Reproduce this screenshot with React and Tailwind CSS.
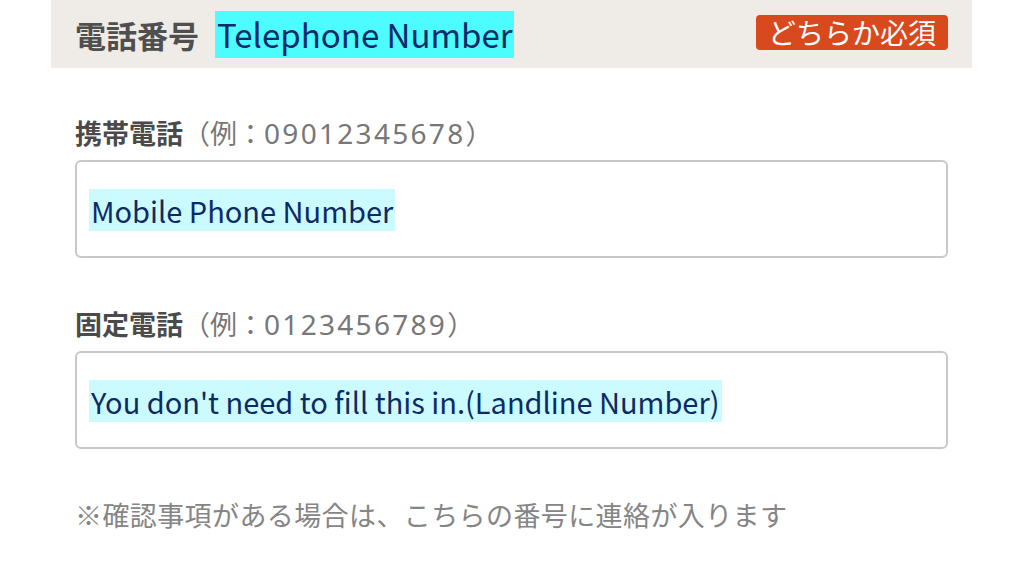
const jp = { fontFamily: '"Noto Sans CJK JP", "Noto Sans", sans-serif' };

function Field({ label, example, value }) {
  return (
    <div className="flex flex-col">
      <div className="flex items-baseline h-[40px] text-[27px] leading-[40px]">
        <span className="font-bold text-[#4a4a4a]">{label}</span>
        <span className="text-[#777777]">
          （例：<span className="text-[28px] tracking-[2.3px]" style={{ fontFamily: '"Noto Sans", sans-serif' }}>{example}</span>）
        </span>
      </div>
      <div className="mt-[7px] h-[98px] border-2 border-[#c8c8c8] rounded-[6px] bg-white flex items-center px-[12px]">
        <span className="bg-[#ccfbff] text-[#0d2a66] text-[29px] leading-[42px] px-[2px] translate-y-[1px]">{value}</span>
      </div>
    </div>
  );
}

export default function App() {
  return (
    <div className="w-[1024px] h-[576px] bg-white overflow-hidden" style={jp}>
      <div className="mx-[51px] w-[921px]">
        {/* Header */}
        <div className="h-[68px] bg-[#efebe6] flex items-center justify-between pl-[24px] pr-[24px]">
          <div className="flex items-center">
            <span className="text-[31px] font-bold text-[#4f4f4f] leading-none">電話番号</span>
            <span className="ml-[16px] bg-[#4dfcff] text-[#0a2a6a] text-[33px] leading-[47px] px-[2px]">Telephone Number</span>
          </div>
          <span className="bg-[#d9491e] text-white text-[28px] leading-[35px] rounded-[4px] px-[12px] -translate-y-[2px]">どちらか必須</span>
        </div>

        {/* Fields */}
        <div className="px-[24px] pt-[45px] flex flex-col gap-[46px]">
          <Field label="携帯電話" example="09012345678" value="Mobile Phone Number" />
          <Field label="固定電話" example="0123456789" value="You don't need to fill this in.(Landline Number)" />
        </div>

        <p className="px-[24px] mt-[46px] text-[27px] tracking-[0.4px] text-[#858585] leading-[40px]">
          ※確認事項がある場合は、こちらの番号に連絡が入ります
        </p>
      </div>
    </div>
  );
}
